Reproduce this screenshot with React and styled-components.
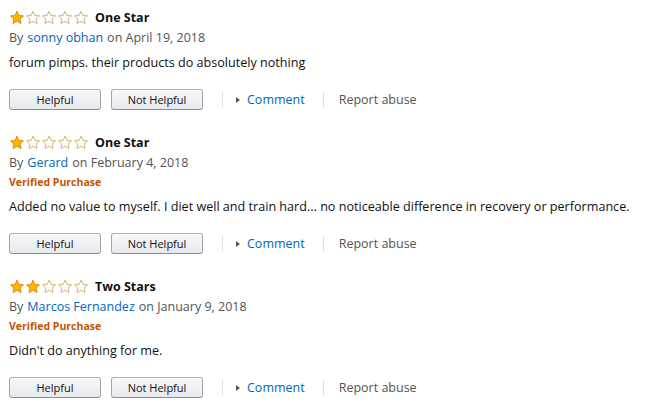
import React from 'react';
import styled, { createGlobalStyle } from 'styled-components';

const GlobalStyle = createGlobalStyle`
  body {
    margin: 0;
    background: #fff;
    font-family: "Open Sans", "Liberation Sans", sans-serif;
    color: #111;
  }
`;

const reviews = [
  {
    stars: 1,
    title: 'One Star',
    author: 'sonny obhan',
    date: 'April 19, 2018',
    verified: false,
    body: 'forum pimps. their products do absolutely nothing',
  },
  {
    stars: 1,
    title: 'One Star',
    author: 'Gerard',
    date: 'February 4, 2018',
    verified: true,
    body: 'Added no value to myself. I diet well and train hard... no noticeable difference in recovery or performance.',
  },
  {
    stars: 2,
    title: 'Two Stars',
    author: 'Marcos Fernandez',
    date: 'January 9, 2018',
    verified: true,
    body: "Didn't do anything for me.",
  },
];

const List = styled.div`
  padding: 8px 9px 0 9px;
  display: flex;
  flex-direction: column;
  gap: 23px;
`;

const Review = styled.div`
  display: flex;
  flex-direction: column;
`;

const TitleRow = styled.div`
  display: flex;
  align-items: center;
  height: 18px;
  gap: 6px;
`;

const Stars = styled.div`
  display: flex;
`;

const Title = styled.span`
  font-weight: 700;
  font-size: 12.5px;
  color: #111;
`;

const Meta = styled.div`
  font-size: 12.5px;
  color: #555;
  height: 20px;
  line-height: 20px;
  margin-top: 2px;
`;

const Author = styled.a`
  color: #0066c0;
  text-decoration: none;
  margin: 0 4px;
`;

const Verified = styled.div`
  font-size: 10.5px;
  font-weight: 700;
  color: #c45500;
  height: 19px;
  line-height: 19px;
`;

const Body = styled.div`
  font-size: 12.6px;
  color: #111;
  line-height: 20px;
  margin-top: 5px;
`;

const Actions = styled.div`
  display: flex;
  align-items: center;
  margin-top: 16px;
  height: 21px;
`;

const Button = styled.button`
  width: 92px;
  height: 21px;
  margin-right: 10px;
  border: 1px solid #adb1b8;
  border-color: #adb1b8 #a2a6ac #8d9096;
  border-radius: 3px;
  background: linear-gradient(to bottom, #f7f8fa, #e7e9ec);
  font-family: "Open Sans", "Liberation Sans", sans-serif;
  font-size: 11px;
  color: #111;
  padding: 0;
  box-shadow: 0 1px 0 rgba(255, 255, 255, 0.6) inset;
`;

const Divider = styled.span`
  width: 1px;
  height: 15px;
  background: #ddd;
  margin: 0 ${(p) => p.$right}px 0 ${(p) => p.$left}px;
`;

const Caret = styled.span`
  width: 0;
  height: 0;
  border-top: 3.5px solid transparent;
  border-bottom: 3.5px solid transparent;
  border-left: 4px solid #555;
  margin-right: 7px;
`;

const CommentLink = styled.a`
  font-size: 12.5px;
  color: #0066c0;
  text-decoration: none;
`;

const Report = styled.span`
  font-size: 12.5px;
  color: #555;
`;

const starPath =
  'M8 1.2 L9.95 5.4 L14.5 5.9 L11.1 9 L12.05 13.6 L8 11.3 L3.95 13.6 L4.9 9 L1.5 5.9 L6.05 5.4 Z';

function Star({ filled }) {
  return (
    <svg width="16" height="15" viewBox="0 0 16 15">
      <path
        d={starPath}
        fill={filled ? '#ffb400' : '#fff'}
        stroke={filled ? '#d48a00' : '#c9a96b'}
        strokeWidth="0.9"
        strokeLinejoin="round"
      />
    </svg>
  );
}

function ReviewItem({ review }) {
  return (
    <Review>
      <TitleRow>
        <Stars>
          {[1, 2, 3, 4, 5].map((n) => (
            <Star key={n} filled={n <= review.stars} />
          ))}
        </Stars>
        <Title>{review.title}</Title>
      </TitleRow>
      <Meta>
        By<Author href="#">{review.author}</Author>on {review.date}
      </Meta>
      {review.verified && <Verified>Verified Purchase</Verified>}
      <Body>{review.body}</Body>
      <Actions>
        <Button>Helpful</Button>
        <Button>Not Helpful</Button>
        <Divider $left={9} $right={13} />
        <Caret />
        <CommentLink href="#">Comment</CommentLink>
        <Divider $left={18} $right={15} />
        <Report>Report abuse</Report>
      </Actions>
    </Review>
  );
}

export default function App() {
  return (
    <>
      <GlobalStyle />
      <List>
        {reviews.map((r, i) => (
          <ReviewItem key={i} review={r} />
        ))}
      </List>
    </>
  );
}
